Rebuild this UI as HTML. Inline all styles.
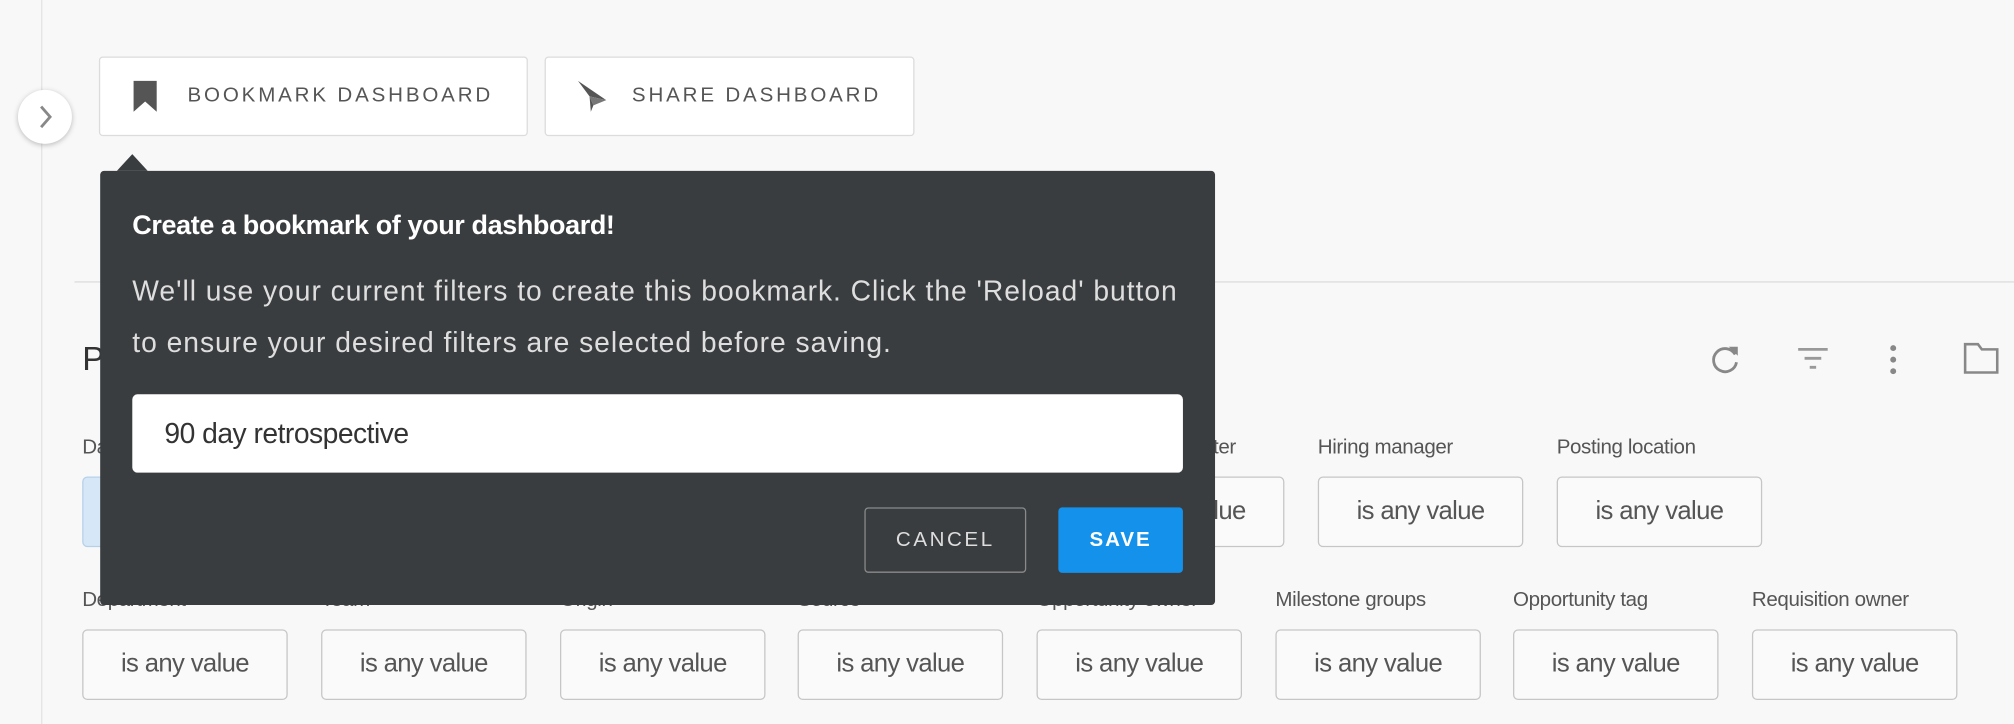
<!DOCTYPE html>
<html><head><meta charset="utf-8"><style>
html,body{margin:0;padding:0;width:2014px;height:724px;overflow:hidden;background:#f8f8f8;font-family:"Liberation Sans",sans-serif;}
#w{position:absolute;left:0;top:0;width:1568px;height:564px;transform:scale(1.2844);transform-origin:0 0;}
.a{position:absolute;}
.btn{position:absolute;background:#fff;border:1px solid #dcdcdc;border-radius:3px;box-sizing:border-box;color:#555;font-size:16px;letter-spacing:2px;}
.lbl{position:absolute;font-size:16px;color:#555;letter-spacing:-0.3px;}
.box{position:absolute;width:160px;height:55px;border:1.5px solid #c6c6c6;border-radius:4px;box-sizing:border-box;background:#fafafa;color:#555;font-size:20px;letter-spacing:-0.5px;text-align:center;line-height:52px;}
</style></head><body><div id="w">
<div class="a" style="left:32px;top:0;width:1px;height:564px;background:#e3e3e3"></div>
<div class="a" style="left:58px;top:219px;width:1510px;height:1px;background:#dcdcdc"></div>
<div class="a" style="left:14px;top:70px;width:42px;height:42px;border-radius:50%;background:#fff;box-shadow:0 1px 4px rgba(0,0,0,.25)"></div>
<svg class="a" style="left:26px;top:80px" width="20" height="22"><path d="M6 3 L13 11 L6 19" stroke="#888" stroke-width="2.2" fill="none"/></svg>

<div class="btn" style="left:77px;top:44px;width:334px;height:62px"></div>
<svg class="a" style="left:103px;top:62px" width="20" height="26"><path d="M1 1 H19 V25 L10 17 L1 25 Z" fill="#555"/></svg>
<div class="a" style="left:146px;top:66px;font-size:16px;letter-spacing:2.2px;color:#555">BOOKMARK DASHBOARD</div>
<div class="btn" style="left:424px;top:44px;width:288px;height:62px"></div>
<svg class="a" style="left:448px;top:62px" width="26" height="26"><path d="M2 1 L24 16 L11 13 Z" fill="#555"/><path d="M11 13 L24 16 L14 20 Z" fill="#777"/><path d="M11 13 L12 25 L14 20 Z" fill="#555"/></svg>
<div class="a" style="left:492px;top:66px;font-size:16px;letter-spacing:2.2px;color:#555">SHARE DASHBOARD</div>

<div class="a" style="left:64px;top:264px;font-size:26px;color:#333">P</div>
<svg class="a" style="left:1330px;top:266px" width="28" height="28"><path d="M21 10 A9 9 0 1 0 22 16" stroke="#888" stroke-width="2.2" fill="none"/><path d="M16 4 L23 4 L23 11 Z" fill="#888"/></svg>
<svg class="a" style="left:1398px;top:268px" width="28" height="26"><path d="M2 4 H25 M7 11 H20 M11 18 H16" stroke="#999" stroke-width="2.2"/></svg>
<svg class="a" style="left:1466px;top:266px" width="16" height="28"><circle cx="8" cy="5" r="2.3" fill="#888"/><circle cx="8" cy="14" r="2.3" fill="#888"/><circle cx="8" cy="23" r="2.3" fill="#888"/></svg>
<svg class="a" style="left:1528px;top:266px" width="30" height="26"><path d="M2 2 H12 L15 6 H27 V24 H2 Z" stroke="#888" stroke-width="2" fill="none"/></svg>

<div class="lbl" style="left:64px;top:340px">Date</div>
<div class="box" style="left:64px;top:371px;width:200px;background:#d6e7f7;border-color:#b7d0ea"></div>
<div class="lbl" style="left:900px;top:340px">Recruiter</div>
<div class="box" style="left:840px;top:371px">is any value</div>
<div class="lbl" style="left:1026px;top:340px">Hiring manager</div>
<div class="box" style="left:1026px;top:371px">is any value</div>
<div class="lbl" style="left:1212px;top:340px">Posting location</div>
<div class="box" style="left:1212px;top:371px">is any value</div>

<div class="lbl" style="left:64px;top:459px">Department</div>
<div class="lbl" style="left:250px;top:459px">Team</div>
<div class="lbl" style="left:436px;top:459px">Origin</div>
<div class="lbl" style="left:621px;top:459px">Source</div>
<div class="lbl" style="left:807px;top:459px">Opportunity owner</div>
<div class="lbl" style="left:993px;top:459px">Milestone groups</div>
<div class="lbl" style="left:1178px;top:459px">Opportunity tag</div>
<div class="lbl" style="left:1364px;top:459px">Requisition owner</div>
<div class="box" style="left:64px;top:490px">is any value</div>
<div class="box" style="left:250px;top:490px">is any value</div>
<div class="box" style="left:436px;top:490px">is any value</div>
<div class="box" style="left:621px;top:490px">is any value</div>
<div class="box" style="left:807px;top:490px">is any value</div>
<div class="box" style="left:993px;top:490px">is any value</div>
<div class="box" style="left:1178px;top:490px">is any value</div>
<div class="box" style="left:1364px;top:490px">is any value</div>

<div class="a" style="left:78px;top:133px;width:868px;height:338px;background:#3a3d40;border-radius:3px"></div>
<div class="a" style="left:91px;top:120px;width:0;height:0;border-left:12px solid transparent;border-right:12px solid transparent;border-bottom:13px solid #3a3d40"></div>
<div class="a" style="left:103px;top:164px;font-size:21px;font-weight:bold;color:#fff;letter-spacing:-0.3px">Create a bookmark of your dashboard!</div>
<div class="a" style="left:103px;top:207px;width:840px;font-size:22px;line-height:40px;color:#dedede;letter-spacing:0.75px"><span style="white-space:nowrap">We'll use your current filters to create this bookmark. Click the 'Reload' button</span><br>to ensure your desired filters are selected before saving.</div>
<div class="a" style="left:103px;top:307px;width:818px;height:61px;background:#fff;border-radius:4px"></div>
<div class="a" style="left:128px;top:325px;font-size:22px;color:#333;letter-spacing:-0.4px">90 day retrospective</div>
<div class="a" style="left:673px;top:395px;width:126px;height:51px;border:1px solid #8a8a8a;border-radius:3px;box-sizing:border-box;color:#ddd;font-size:16px;letter-spacing:2px;text-align:center;line-height:49px">CANCEL</div>
<div class="a" style="left:824px;top:395px;width:97px;height:51px;background:#1491ea;border-radius:3px;color:#fff;font-size:16px;letter-spacing:1.5px;text-align:center;line-height:51px;font-weight:bold">SAVE</div>
</div></body></html>
